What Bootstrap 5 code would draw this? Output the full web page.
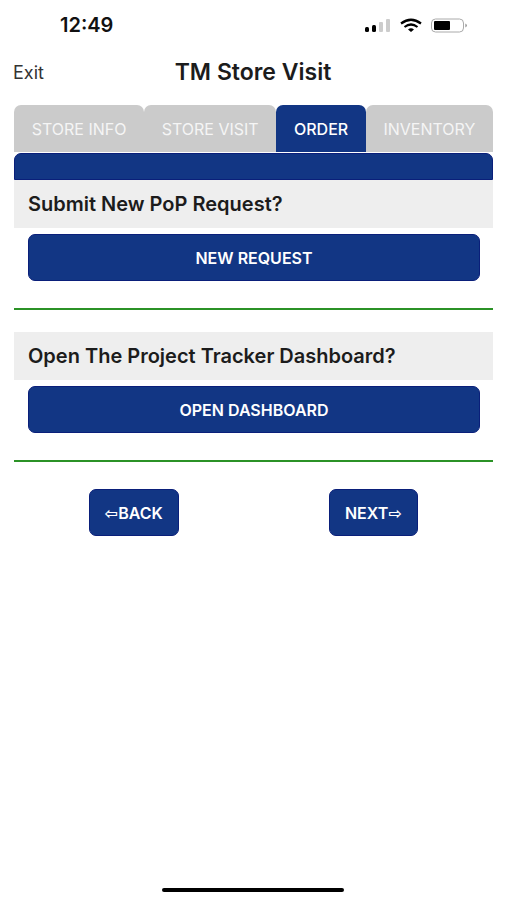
<!DOCTYPE html>
<html lang="en">
<head>
<meta charset="utf-8">
<meta name="viewport" content="width=device-width, initial-scale=1">
<title>TM Store Visit</title>
<link href="https://cdn.jsdelivr.net/npm/bootstrap@5.3.0/dist/css/bootstrap.min.css" rel="stylesheet">
<style>
  :root { --brand: #123684; --brand-edge: #0a1f7a; }
  body { font-family: Inter, "DejaVu Sans", "Liberation Sans", sans-serif; color: #1c1c1c; background: #fff; }
  .status-bar { height: 50px; padding: 0 38px 0 60px; font-size: 20px; line-height: 24px; color: #111; }
  .app-bar { display: grid; grid-template-columns: 1fr auto 1fr; height: 44px; padding: 0 13px; }
  .exit-link { font-size: 18px; color: #333; }
  .app-title { font-size: 23px; line-height: 28px; }
  .page-body { padding: 11px 13px 0 14px; }
  .visit-tabs .nav-link { height: 47px; padding: 0; border-radius: 7px 7px 0 0; background: #cbcbcb; color: #f5f5f5; font-size: 16px; line-height: 20px; }
  .visit-tabs .nav-link.active { background: var(--brand); color: #fff; font-weight: 500; }
  .band { height: 27px; margin-top: 1px; background: var(--brand); border: 1px solid var(--brand-edge); border-radius: 7px 7px 0 0; }
  .question { height: 48px; padding: 0 14px; background: #eee; font-size: 20px; line-height: 24px; }
  .btn-brand { --bs-btn-color: #fff; --bs-btn-bg: var(--brand); --bs-btn-border-color: var(--brand-edge); --bs-btn-hover-color: #fff; --bs-btn-hover-bg: #0d2c70; --bs-btn-hover-border-color: var(--brand-edge); --bs-btn-border-radius: 7px; --bs-btn-font-weight: 600; --bs-btn-font-size: 16px; --bs-btn-padding-x: 15px; --bs-btn-padding-y: 0; height: 47px; line-height: 20px; }
  .action { padding: 6px 13px 27px 14px; }
  .rule { height: 2px; margin: 0 0 22px; border: 0; background: #2b9226; opacity: 1; }
  .step-nav { padding-top: 5px; }
  .home-bar { width: 36%; height: 4px; margin-bottom: 8px; background: #000; }
</style>
</head>
<body class="min-vh-100 d-flex flex-column">
<header>
  <div class="status-bar d-flex align-items-center justify-content-between">
    <span class="fw-semibold">12:49</span>
    <svg width="104" height="16" viewBox="0 0 104 16" role="img" aria-label="Signal, Wi-Fi and battery">
      <g fill="#000"><rect x="1" y="10" width="4" height="5" rx="1.500"/><rect x="8" y="8" width="4" height="7" rx="1.500"/></g>
      <g fill="#ccc"><rect x="15" y="5" width="4" height="10" rx="1"/><rect x="22" y="2" width="4" height="13" rx="1"/></g>
      <g fill="none" stroke="#000" stroke-width="2.200"><path d="M37 6.500Q47-1 57 6.500"/><path d="M40.500 10Q47 5 53.500 10"/></g>
      <path d="M44 12.500Q47 10 50 12.500L47 15Z" fill="#000"/>
      <rect x="67.500" y="2" width="32" height="13" rx="4" fill="none" stroke="#aaa"/>
      <rect x="70" y="4" width="16" height="9" rx="1" fill="#000"/>
      <path d="M101.500 6.500Q104 8.500 101.500 10.500Z" fill="#777"/>
    </svg>
  </div>
  <div class="app-bar align-items-center">
    <a href="#" class="exit-link text-decoration-none">Exit</a>
    <h1 class="app-title fw-semibold m-0">TM Store Visit</h1>
  </div>
</header>
<main class="page-body flex-grow-1">
  <nav class="visit-tabs nav flex-nowrap" aria-label="Visit sections">
    <a class="nav-link flex-fill d-flex align-items-center justify-content-center text-nowrap" href="#">STORE INFO</a>
    <a class="nav-link flex-fill d-flex align-items-center justify-content-center text-nowrap" href="#">STORE VISIT</a>
    <a class="nav-link active flex-fill d-flex align-items-center justify-content-center text-nowrap" aria-current="page" href="#">ORDER</a>
    <a class="nav-link flex-fill d-flex align-items-center justify-content-center text-nowrap" href="#">INVENTORY</a>
  </nav>
  <div class="band"></div>
  <section>
    <h2 class="question d-flex align-items-center fw-semibold m-0">Submit New PoP Request?</h2>
    <div class="action"><button type="button" class="btn btn-brand w-100">NEW REQUEST</button></div>
    <hr class="rule">
  </section>
  <section>
    <h2 class="question d-flex align-items-center fw-semibold m-0">Open The Project Tracker Dashboard?</h2>
    <div class="action"><button type="button" class="btn btn-brand w-100">OPEN DASHBOARD</button></div>
    <hr class="rule">
  </section>
  <div class="step-nav row g-0 text-center">
    <div class="col-6"><button type="button" class="btn btn-brand">⇦BACK</button></div>
    <div class="col-6"><button type="button" class="btn btn-brand">NEXT⇨</button></div>
  </div>
</main>
<footer class="d-flex justify-content-center"><div class="home-bar rounded-pill"></div></footer>
<script src="https://cdn.jsdelivr.net/npm/bootstrap@5.3.0/dist/js/bootstrap.bundle.min.js"></script>
</body>
</html>
